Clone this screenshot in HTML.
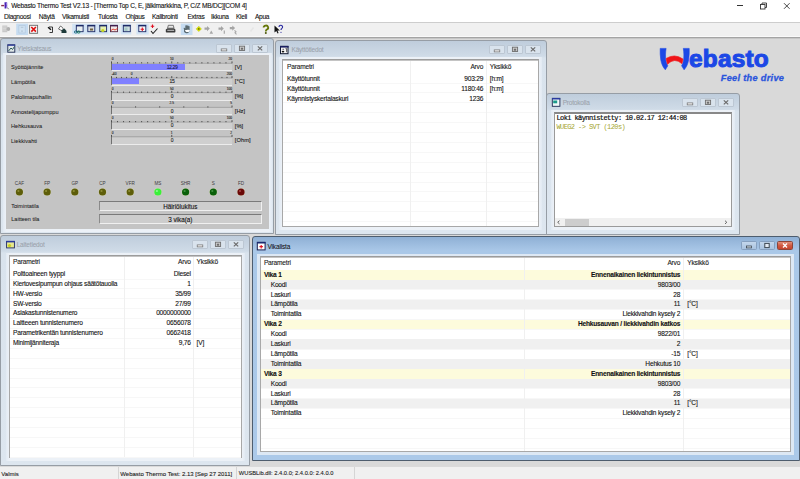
<!DOCTYPE html><html><head><meta charset="utf-8"><style>
*{margin:0;padding:0;box-sizing:border-box}
html,body{width:800px;height:479px;overflow:hidden}
body{position:relative;background:#d9d9d9;font-family:"Liberation Sans",sans-serif;font-size:6px;color:#000}
.a{position:absolute}
.t{position:absolute;white-space:nowrap;-webkit-text-stroke-width:0.1px}
svg{position:absolute;overflow:visible}
</style></head><body><div class="a" style="left:0px;top:0px;width:800px;height:22px;background:#fff"></div>
<svg style="left:0;top:0" width="12" height="12"><path d="M1.2 5.6h3" stroke="#8a3050" stroke-width="1.4"/><path d="M4.5 2.2h2.5l-0.4 1.8 0.4 1.2-0.6 3.2h-1.8z" fill="#4a22b8"/><path d="M7.2 2.5v5.5" stroke="#c8c0f0" stroke-width="0.9"/><path d="M7.4 7.6l1.2 1.6" stroke="#606060" stroke-width="0.9"/></svg>
<div class="t" style="left:11.20px;top:3.41px;font-size:6.6px;line-height:6.6px;color:#111;letter-spacing:-0.22px;">Webasto Thermo Test V2.13 - [Thermo Top C, E, jälkimarkkina, P, C/Z MB/DC][COM 4]</div>
<div class="a" style="left:737px;top:5px;width:6px;height:1px;background:#333"></div>
<svg style="left:0;top:0" width="800" height="12"><rect x="760.5" y="4.5" width="4.5" height="4.5" fill="none" stroke="#333" stroke-width="0.9"/><path d="M762 4.5V3h4.5v4.5H765" fill="none" stroke="#333" stroke-width="0.9"/><path d="M784 3.2l5.6 5.6M789.6 3.2L784 8.8" stroke="#333" stroke-width="0.9"/></svg>
<div class="t" style="left:4.00px;top:14.01px;font-size:6.6px;line-height:6.6px;color:#111;letter-spacing:-0.3px;">Diagnoosi</div>
<div class="t" style="left:38.80px;top:14.01px;font-size:6.6px;line-height:6.6px;color:#111;letter-spacing:-0.3px;">Näytä</div>
<div class="t" style="left:62.00px;top:14.01px;font-size:6.6px;line-height:6.6px;color:#111;letter-spacing:-0.3px;">Vikamuisti</div>
<div class="t" style="left:98.00px;top:14.01px;font-size:6.6px;line-height:6.6px;color:#111;letter-spacing:-0.3px;">Tulosta</div>
<div class="t" style="left:125.50px;top:14.01px;font-size:6.6px;line-height:6.6px;color:#111;letter-spacing:-0.3px;">Ohjaus</div>
<div class="t" style="left:152.00px;top:14.01px;font-size:6.6px;line-height:6.6px;color:#111;letter-spacing:-0.3px;">Kalibrointi</div>
<div class="t" style="left:187.50px;top:14.01px;font-size:6.6px;line-height:6.6px;color:#111;letter-spacing:-0.3px;">Extras</div>
<div class="t" style="left:211.00px;top:14.01px;font-size:6.6px;line-height:6.6px;color:#111;letter-spacing:-0.3px;">Ikkuna</div>
<div class="t" style="left:236.00px;top:14.01px;font-size:6.6px;line-height:6.6px;color:#111;letter-spacing:-0.3px;">Kieli</div>
<div class="t" style="left:255.00px;top:14.01px;font-size:6.6px;line-height:6.6px;color:#111;letter-spacing:-0.3px;">Apua</div>
<div class="a" style="left:0px;top:22px;width:800px;height:16px;background:#f0f0f0"></div>
<div class="a" style="left:0px;top:22px;width:800px;height:1px;background:#cdcdcd"></div>
<div class="a" style="left:0px;top:36px;width:800px;height:1px;background:#f9f9f9"></div>
<div class="a" style="left:0px;top:37px;width:800px;height:1px;background:#a4a4a4"></div>
<div class="a" style="left:0px;top:38px;width:800px;height:1px;background:#c6c6c6"></div>
<svg style="left:0;top:0" width="800" height="40"><path d="M2.3 25.6h5v6.6h-5z" fill="#c8c8c8"/><path d="M2.8 27h4M2.8 28.5h4M2.8 30h4" stroke="#e4e4e4" stroke-width="0.5"/><circle cx="8.3" cy="29" r="1.9" fill="#b0b0b0"/><rect x="16.2" y="23.6" width="11.8" height="11.4" fill="#c6dcf1"/><path d="M18.8 25.5h6.5v7.5h-6.5z" fill="#d0e2f2" stroke="#b0c4d8" stroke-width="0.6"/><path d="M20.8 27.3h2.5" stroke="#9fb0c0" stroke-width="0.6"/><circle cx="22" cy="31" r="0.6" fill="#8c9cac"/><rect x="29.6" y="25.3" width="8" height="8" fill="#f4f4f4" stroke="#6a6a6a" stroke-width="0.9"/><path d="M31.3 27l4.6 4.6M35.9 27l-4.6 4.6" stroke="#e01010" stroke-width="1.6"/><path d="M49 27h3.5v5.5h-3" fill="none" stroke="#222" stroke-width="0.9"/><path d="M48 27.2l3 2.6" stroke="#111" stroke-width="1.4"/><path d="M58.5 29l2-3 2 1.5 1 2 -1 1.5z" fill="#fff" stroke="#333" stroke-width="0.7"/><path d="M61.5 30l3-1.5 2 2.5v2h-5z" fill="#1e3a3a"/><rect x="72.2" y="23.8" width="47.3" height="10.7" fill="#d3e4f4"/><rect x="108.5" y="23.8" width="11" height="10.7" fill="#e2ecf6"/><rect x="120.6" y="23.8" width="10.7" height="10.7" fill="#d3e4f4"/><rect x="136.4" y="23.8" width="12.3" height="10.7" fill="#d3e4f4"/><rect x="180.8" y="23.6" width="11.7" height="11.4" fill="#c6dcf1"/><rect x="76.3" y="25.3" width="6.8" height="6.4" fill="#e8eef0" stroke="#1d2a66" stroke-width="0.9"/><rect x="76" y="25" width="7.4" height="1.4" fill="#1d2a66"/><ellipse cx="75.8" cy="32" rx="1.5" ry="1.1" fill="none" stroke="#1a6a80" stroke-width="0.9"/><ellipse cx="78.6" cy="32" rx="1.5" ry="1.1" fill="none" stroke="#1a7a5a" stroke-width="0.9"/><rect x="87.8" y="25.3" width="7" height="6.4" fill="#d8dde0" stroke="#1d2a66" stroke-width="0.9"/><rect x="87.5" y="25" width="7.6" height="1.4" fill="#1d2a66"/><path d="M90 28.5h3v2h-3z" fill="#706040"/><rect x="99.8" y="25.3" width="6.8" height="6.4" fill="#e6f0b0" stroke="#1d2a66" stroke-width="0.9"/><rect x="99.5" y="25" width="7.4" height="1.4" fill="#1d2a66"/><circle cx="102.8" cy="30.5" r="1.6" fill="#c8d820"/><rect x="110.5" y="25.3" width="7" height="6.4" fill="#f0e8e8" stroke="#5a2a40" stroke-width="0.9"/><rect x="110.2" y="25" width="7.6" height="1.4" fill="#402050"/><path d="M111 30.5l2-1.5 2 1 2.5-1.5" stroke="#e03020" stroke-width="0.9" fill="none"/><rect x="123.3" y="25.3" width="7" height="6.4" fill="#cfe0e0" stroke="#1d2a66" stroke-width="0.9"/><rect x="123" y="25" width="7.6" height="1.4" fill="#1d2a66"/><rect x="124.5" y="27.5" width="3" height="3.5" fill="#a8c8c8"/><rect x="138.8" y="25.3" width="7" height="6.4" fill="#f8f8f8" stroke="#1d2a66" stroke-width="0.9"/><rect x="138.5" y="25" width="7.6" height="1.4" fill="#1d2a66"/><path d="M142.3 27.5v3.5M140.6 29.2h3.4" stroke="#e01020" stroke-width="1.1"/><path d="M152.5 24.6v3.4M150.8 26.3h3.4" stroke="#e01020" stroke-width="1.1"/><path d="M151 31l2 2.5 4.5-5" stroke="#222" stroke-width="1.1" fill="none"/><path d="M167.5 28.2h6.5l1.4 1.2v2.4q0 0.8-0.8 0.8h-8q-0.8 0-0.8-0.8v-2.4z" fill="#3c3c3c"/><path d="M168.3 25.3h5l0.7 2.9h-6.4z" fill="#e8e8e8" stroke="#444" stroke-width="0.7"/><path d="M167.3 30.3h6.8" stroke="#d8d8d8" stroke-width="0.9"/><path d="M184 29.2c-0.6-0.8-0.3-1.6 0.5-1.4l0.8 0.6v-2.6c0-0.8 1-0.8 1.1 0v-0.3c0-0.8 1.1-0.8 1.1 0v0.4c0.1-0.7 1.1-0.7 1.1 0v0.6c0.1-0.6 1-0.6 1 0.1v3.6c0 1.6-1.1 3-2.6 3h-0.8c-1 0-1.6-0.6-2.2-1.4z" fill="#5b6b72"/><path d="M184.8 30.3c0.6 0.9 1.2 1.8 2.3 1.8h0.8c1 0 1.8-0.8 2-1.9c-1.5-0.6-3.3-0.6-5.1 0.1z" fill="#fff"/><path d="M198.8 26.2l2.7 2.7-2.7 2.7-2.7-2.7z" fill="#d6e000" stroke="#b8c000" stroke-width="0.4"/><circle cx="198.8" cy="28.9" r="0.9" fill="#6a7000"/><path d="M204.5 27.5h2.5v-1.5l2.8 2.6-2.8 2.6v-1.5h-2.5z" fill="#a5a5a5"/><path d="M209.5 33.8l1.8-3.2 1.8 3.2z" fill="#a8a8a8"/><path d="M218.5 27.5h2.5v-1.5l2.8 2.6-2.8 2.6v-1.5h-2.5z" fill="#a5a5a5"/><path d="M224.3 30.6v3.2" stroke="#a8a8a8" stroke-width="1.2"/><path d="M229.8 27h2.5v-1.5l2.8 2.6-2.8 2.6v-1.5h-2.5z" fill="#a5a5a5"/><path d="M234.5 30.3l1.5 1.5-1 1 1.5 1.5" stroke="#a8a8a8" stroke-width="1.1" fill="none"/><path d="M250.5 31.5l3-4" stroke="#e6e6e6" stroke-width="1.6"/><path d="M263.6 27.6a2.3 2.1 0 1 1 3.3 1.9c-0.9 0.5-1.1 1-1.1 1.9" stroke="#66780a" stroke-width="1.8" fill="none"/><circle cx="265.8" cy="32.9" r="1" fill="#4a5608"/><path d="M274.5 25.5v7l1.8-1.6 1.3 2.6 1-0.5-1.2-2.5h2.4z" fill="#111"/><path d="M279 27a1.8 1.7 0 1 1 2.8 1.4c-0.7 0.4-0.8 0.9-0.8 1.6" stroke="#2a2aa0" stroke-width="1.1" fill="none"/><circle cx="281" cy="32.3" r="0.6" fill="#2a2aa0"/></svg>
<div class="a" style="left:0px;top:38px;width:274px;height:196px;border:1px solid #969da5;border-radius:3px 3px 0 0;background:linear-gradient(#bfcddc 0px,#cfdbe7 15px,#d9e3ed 17px,#dde6ef 100%)"></div>
<div class="a" style="left:3px;top:53px;width:269px;height:179px;background:linear-gradient(90deg,#e2eaf3,#ecf1f7 3px,#ecf1f7 calc(100% - 3px),#e2eaf3)"></div>
<div class="a" style="left:6px;top:55px;width:263px;height:174px;background:#c4c4c4"></div>
<div class="a" style="left:216px;top:44px;width:16px;height:9px;background:#d9e3ed;border:1px solid #bcc7d3;border-radius:1px"></div>
<div class="a" style="left:234px;top:44px;width:16px;height:9px;background:#d9e3ed;border:1px solid #bcc7d3;border-radius:1px"></div>
<div class="a" style="left:252px;top:44px;width:16px;height:9px;background:#d9e3ed;border:1px solid #bcc7d3;border-radius:1px"></div>
<svg style="left:0;top:0" width="1" height="1"><rect x="221.20" y="48.90" width="5.6" height="2" fill="#f4f4f4" stroke="#6e6e6e" stroke-width="0.7"/><rect x="239.40" y="46.20" width="5.2" height="4.3" fill="#d0d0d0" stroke="#6e6e6e" stroke-width="0.9"/><rect x="240.80" y="47.70" width="2.4" height="2" fill="#6e6e6e"/>
<path d="M257.80 46.40l4.4 4M262.20 46.40l-4.4 4" stroke="#6a6a6a" stroke-width="1.2"/></svg>
<div class="t" style="left:17.30px;top:46.30px;font-size:6.5px;line-height:6.5px;color:#99a1aa;-webkit-text-stroke-width:0.05px;letter-spacing:-0.2px;">Yleiskatsaus</div>
<div class="a" style="left:275px;top:40px;width:272px;height:195px;border:1px solid #969da5;border-radius:3px 3px 0 0;background:linear-gradient(#bfcddc 0px,#cfdbe7 15px,#d9e3ed 17px,#dde6ef 100%)"></div>
<div class="a" style="left:279px;top:57px;width:263px;height:173px;background:linear-gradient(90deg,#e2eaf3,#ecf1f7 3px,#ecf1f7 calc(100% - 3px),#e2eaf3)"></div>
<div class="a" style="left:489px;top:45px;width:16px;height:9px;background:#d9e3ed;border:1px solid #bcc7d3;border-radius:1px"></div>
<div class="a" style="left:507px;top:45px;width:16px;height:9px;background:#d9e3ed;border:1px solid #bcc7d3;border-radius:1px"></div>
<div class="a" style="left:525px;top:45px;width:16px;height:9px;background:#d9e3ed;border:1px solid #bcc7d3;border-radius:1px"></div>
<svg style="left:0;top:0" width="1" height="1"><rect x="494.20" y="49.90" width="5.6" height="2" fill="#f4f4f4" stroke="#6e6e6e" stroke-width="0.7"/><rect x="512.40" y="47.20" width="5.2" height="4.3" fill="#d0d0d0" stroke="#6e6e6e" stroke-width="0.9"/><rect x="513.80" y="48.70" width="2.4" height="2" fill="#6e6e6e"/>
<path d="M530.80 47.40l4.4 4M535.20 47.40l-4.4 4" stroke="#6a6a6a" stroke-width="1.2"/></svg>
<div class="t" style="left:291.50px;top:47.20px;font-size:6.5px;line-height:6.5px;color:#99a1aa;-webkit-text-stroke-width:0.05px;letter-spacing:-0.2px;">Käyttötiedot</div>
<div class="a" style="left:282px;top:59px;width:257px;height:168px;background:#fff;border:1px solid #a8a8a8;border-top:1px solid #9c9c9c;box-shadow:inset 0 1px #c4c4c4"></div>
<div class="a" style="left:283px;top:82.50px;width:255px;height:1px;background:#f7f7f7"></div>
<div class="a" style="left:283px;top:92.40px;width:255px;height:1px;background:#f7f7f7"></div>
<div class="a" style="left:283px;top:102.30px;width:255px;height:1px;background:#f7f7f7"></div>
<div class="a" style="left:283px;top:112.20px;width:255px;height:1px;background:#f7f7f7"></div>
<div class="a" style="left:283px;top:122.10px;width:255px;height:1px;background:#f7f7f7"></div>
<div class="a" style="left:283px;top:132.00px;width:255px;height:1px;background:#f7f7f7"></div>
<div class="a" style="left:283px;top:141.90px;width:255px;height:1px;background:#f7f7f7"></div>
<div class="a" style="left:283px;top:151.80px;width:255px;height:1px;background:#f7f7f7"></div>
<div class="a" style="left:283px;top:161.70px;width:255px;height:1px;background:#f7f7f7"></div>
<div class="a" style="left:283px;top:171.60px;width:255px;height:1px;background:#f7f7f7"></div>
<div class="a" style="left:283px;top:181.50px;width:255px;height:1px;background:#f7f7f7"></div>
<div class="a" style="left:283px;top:191.40px;width:255px;height:1px;background:#f7f7f7"></div>
<div class="a" style="left:283px;top:201.30px;width:255px;height:1px;background:#f7f7f7"></div>
<div class="a" style="left:283px;top:211.20px;width:255px;height:1px;background:#f7f7f7"></div>
<div class="a" style="left:283px;top:221.10px;width:255px;height:1px;background:#f7f7f7"></div>
<div class="a" style="left:410px;top:61px;width:1px;height:165px;background:#f0f0f0"></div>
<div class="a" style="left:486px;top:61px;width:1px;height:165px;background:#f0f0f0"></div>
<div class="a" style="left:546px;top:93px;width:194px;height:142px;border:1px solid #969da5;border-radius:3px 3px 0 0;background:linear-gradient(#bfcddc 0px,#cfdbe7 15px,#d9e3ed 17px,#dde6ef 100%)"></div>
<div class="a" style="left:551px;top:110px;width:184px;height:120px;background:linear-gradient(90deg,#e2eaf3,#ecf1f7 3px,#ecf1f7 calc(100% - 3px),#e2eaf3)"></div>
<div class="a" style="left:682px;top:98px;width:16px;height:9px;background:#d9e3ed;border:1px solid #bcc7d3;border-radius:1px"></div>
<div class="a" style="left:700px;top:98px;width:16px;height:9px;background:#d9e3ed;border:1px solid #bcc7d3;border-radius:1px"></div>
<div class="a" style="left:718px;top:98px;width:16px;height:9px;background:#d9e3ed;border:1px solid #bcc7d3;border-radius:1px"></div>
<svg style="left:0;top:0" width="1" height="1"><rect x="687.20" y="102.90" width="5.6" height="2" fill="#f4f4f4" stroke="#6e6e6e" stroke-width="0.7"/><rect x="705.40" y="100.20" width="5.2" height="4.3" fill="#d0d0d0" stroke="#6e6e6e" stroke-width="0.9"/><rect x="706.80" y="101.70" width="2.4" height="2" fill="#6e6e6e"/>
<path d="M723.80 100.40l4.4 4M728.20 100.40l-4.4 4" stroke="#6a6a6a" stroke-width="1.2"/></svg>
<div class="t" style="left:562.70px;top:99.70px;font-size:6.5px;line-height:6.5px;color:#99a1aa;-webkit-text-stroke-width:0.05px;letter-spacing:-0.2px;">Protokolla</div>
<div class="a" style="left:554px;top:112px;width:178px;height:115px;background:#fff;border:1px solid #9a9a9a;border-top:2px solid #888"></div>
<div class="a" style="left:0px;top:235px;width:250px;height:231px;border:1px solid #969da5;border-radius:3px 3px 0 0;background:linear-gradient(#bfcddc 0px,#cfdbe7 15px,#d9e3ed 17px,#dde6ef 100%)"></div>
<div class="a" style="left:6px;top:253px;width:239px;height:208px;background:linear-gradient(90deg,#e2eaf3,#ecf1f7 3px,#ecf1f7 calc(100% - 3px),#e2eaf3)"></div>
<div class="a" style="left:192px;top:240px;width:16px;height:9px;background:#d9e3ed;border:1px solid #bcc7d3;border-radius:1px"></div>
<div class="a" style="left:210px;top:240px;width:16px;height:9px;background:#d9e3ed;border:1px solid #bcc7d3;border-radius:1px"></div>
<div class="a" style="left:228px;top:240px;width:16px;height:9px;background:#d9e3ed;border:1px solid #bcc7d3;border-radius:1px"></div>
<svg style="left:0;top:0" width="1" height="1"><rect x="197.20" y="244.90" width="5.6" height="2" fill="#f4f4f4" stroke="#6e6e6e" stroke-width="0.7"/><rect x="215.40" y="242.20" width="5.2" height="4.3" fill="#d0d0d0" stroke="#6e6e6e" stroke-width="0.9"/><rect x="216.80" y="243.70" width="2.4" height="2" fill="#6e6e6e"/>
<path d="M233.80 242.40l4.4 4M238.20 242.40l-4.4 4" stroke="#6a6a6a" stroke-width="1.2"/></svg>
<div class="t" style="left:16.70px;top:242.20px;font-size:6.5px;line-height:6.5px;color:#99a1aa;-webkit-text-stroke-width:0.05px;letter-spacing:-0.2px;">Laitetiedot</div>
<div class="a" style="left:9px;top:255px;width:233px;height:203px;background:#fff;border:1px solid #a8a8a8;border-top:1px solid #9c9c9c;box-shadow:inset 0 1px #c4c4c4"></div>
<div class="a" style="left:10px;top:278.50px;width:231px;height:1px;background:#f7f7f7"></div>
<div class="a" style="left:10px;top:288.40px;width:231px;height:1px;background:#f7f7f7"></div>
<div class="a" style="left:10px;top:298.30px;width:231px;height:1px;background:#f7f7f7"></div>
<div class="a" style="left:10px;top:308.20px;width:231px;height:1px;background:#f7f7f7"></div>
<div class="a" style="left:10px;top:318.10px;width:231px;height:1px;background:#f7f7f7"></div>
<div class="a" style="left:10px;top:328.00px;width:231px;height:1px;background:#f7f7f7"></div>
<div class="a" style="left:10px;top:337.90px;width:231px;height:1px;background:#f7f7f7"></div>
<div class="a" style="left:10px;top:347.80px;width:231px;height:1px;background:#f7f7f7"></div>
<div class="a" style="left:10px;top:357.70px;width:231px;height:1px;background:#f7f7f7"></div>
<div class="a" style="left:10px;top:367.60px;width:231px;height:1px;background:#f7f7f7"></div>
<div class="a" style="left:10px;top:377.50px;width:231px;height:1px;background:#f7f7f7"></div>
<div class="a" style="left:10px;top:387.40px;width:231px;height:1px;background:#f7f7f7"></div>
<div class="a" style="left:10px;top:397.30px;width:231px;height:1px;background:#f7f7f7"></div>
<div class="a" style="left:10px;top:407.20px;width:231px;height:1px;background:#f7f7f7"></div>
<div class="a" style="left:10px;top:417.10px;width:231px;height:1px;background:#f7f7f7"></div>
<div class="a" style="left:10px;top:427.00px;width:231px;height:1px;background:#f7f7f7"></div>
<div class="a" style="left:10px;top:436.90px;width:231px;height:1px;background:#f7f7f7"></div>
<div class="a" style="left:10px;top:446.80px;width:231px;height:1px;background:#f7f7f7"></div>
<div class="a" style="left:10px;top:456.70px;width:231px;height:1px;background:#f7f7f7"></div>
<div class="a" style="left:124px;top:257px;width:1px;height:200px;background:#f0f0f0"></div>
<div class="a" style="left:193px;top:257px;width:1px;height:200px;background:#f0f0f0"></div>
<div class="a" style="left:252px;top:236px;width:548px;height:225px;border:1px solid #4e5d6e;border-radius:3px 3px 0 0;background:linear-gradient(#8fb0d5 0px,#aac8e8 14px,#abc9e9 100%)"></div>
<div class="a" style="left:257px;top:254px;width:537px;height:201px;background:#dde8f4"></div>
<div class="a" style="left:741px;top:241px;width:16px;height:9px;background:linear-gradient(#c4d7ec,#a9c3e0);border:1px solid #86a0bf;border-radius:1.5px"></div>
<div class="a" style="left:759px;top:241px;width:16px;height:9px;background:linear-gradient(#c4d7ec,#a9c3e0);border:1px solid #86a0bf;border-radius:1.5px"></div>
<div class="a" style="left:777px;top:241px;width:16px;height:9px;background:linear-gradient(#e2907c,#d05a42 50%,#c4442e);border:1px solid #8d4538;border-radius:1.5px"></div>
<svg style="left:0;top:0" width="1" height="1"><rect x="746.60" y="246.00" width="4.8" height="1.9" fill="#dde6ef" stroke="#3c4650" stroke-width="0.8"/><rect x="764.80" y="243.40" width="4.4" height="4.2" fill="#e4ecf4" stroke="#3c4650" stroke-width="1"/>
<path d="M783.00 243.60l4 3.8M787.00 243.60l-4 3.8" stroke="#fff" stroke-width="1.4"/></svg>
<div class="t" style="left:267.50px;top:244.00px;font-size:6.5px;line-height:6.5px;color:#111;letter-spacing:-0.15px;-webkit-text-stroke-width:0.05px;">Vikalista</div>
<div class="a" style="left:260px;top:256px;width:531px;height:196px;background:#fff;border:1px solid #a8a8a8;border-top:1px solid #9c9c9c;box-shadow:inset 0 1px #c4c4c4"></div>
<div class="a" style="left:261px;top:270.10px;width:529px;height:9.90px;background:#fdfbdc"></div>
<div class="a" style="left:261px;top:279.50px;width:529px;height:1px;background:#f7f7f7"></div>
<div class="a" style="left:261px;top:280.00px;width:529px;height:9.90px;background:#f0f0f0"></div>
<div class="a" style="left:261px;top:289.40px;width:529px;height:1px;background:#f7f7f7"></div>
<div class="a" style="left:261px;top:299.30px;width:529px;height:1px;background:#f7f7f7"></div>
<div class="a" style="left:261px;top:299.80px;width:529px;height:9.90px;background:#f0f0f0"></div>
<div class="a" style="left:261px;top:309.20px;width:529px;height:1px;background:#f7f7f7"></div>
<div class="a" style="left:261px;top:319.10px;width:529px;height:1px;background:#f7f7f7"></div>
<div class="a" style="left:261px;top:319.60px;width:529px;height:9.90px;background:#fdfbdc"></div>
<div class="a" style="left:261px;top:329.00px;width:529px;height:1px;background:#f7f7f7"></div>
<div class="a" style="left:261px;top:338.90px;width:529px;height:1px;background:#f7f7f7"></div>
<div class="a" style="left:261px;top:339.40px;width:529px;height:9.90px;background:#f0f0f0"></div>
<div class="a" style="left:261px;top:348.80px;width:529px;height:1px;background:#f7f7f7"></div>
<div class="a" style="left:261px;top:358.70px;width:529px;height:1px;background:#f7f7f7"></div>
<div class="a" style="left:261px;top:359.20px;width:529px;height:9.90px;background:#f0f0f0"></div>
<div class="a" style="left:261px;top:368.60px;width:529px;height:1px;background:#f7f7f7"></div>
<div class="a" style="left:261px;top:369.10px;width:529px;height:9.90px;background:#fdfbdc"></div>
<div class="a" style="left:261px;top:378.50px;width:529px;height:1px;background:#f7f7f7"></div>
<div class="a" style="left:261px;top:379.00px;width:529px;height:9.90px;background:#f0f0f0"></div>
<div class="a" style="left:261px;top:388.40px;width:529px;height:1px;background:#f7f7f7"></div>
<div class="a" style="left:261px;top:398.30px;width:529px;height:1px;background:#f7f7f7"></div>
<div class="a" style="left:261px;top:398.80px;width:529px;height:9.90px;background:#f0f0f0"></div>
<div class="a" style="left:261px;top:408.20px;width:529px;height:1px;background:#f7f7f7"></div>
<div class="a" style="left:261px;top:418.10px;width:529px;height:1px;background:#f7f7f7"></div>
<div class="a" style="left:261px;top:428.00px;width:529px;height:1px;background:#f7f7f7"></div>
<div class="a" style="left:261px;top:437.90px;width:529px;height:1px;background:#f7f7f7"></div>
<div class="a" style="left:261px;top:447.80px;width:529px;height:1px;background:#f7f7f7"></div>
<div class="a" style="left:524px;top:258px;width:1px;height:193px;background:#f0f0f0"></div>
<div class="a" style="left:683px;top:258px;width:1px;height:193px;background:#f0f0f0"></div>
<div class="t" style="left:11.00px;top:65.46px;font-size:5.6px;line-height:5.6px;color:#1a1a1a;-webkit-text-stroke-width:0.05px;">Syöttöjännite</div>
<div class="t" style="left:234.80px;top:64.79px;font-size:5.8px;line-height:5.8px;color:#1a1a1a;">[V]</div>
<div class="a" style="left:111.00px;top:63.10px;width:121.00px;height:7.2px;background:#cfcfcf;border-left:1px solid #707070"></div>
<div class="a" style="left:111.50px;top:70.10px;width:120.50px;height:1px;background:#ececec"></div>
<div class="a" style="left:112.00px;top:63.70px;width:73.13px;height:6px;background:#8080ff"></div>
<svg style="left:0;top:0" width="1" height="1"><path d="M111.5 63.300000000000004H232.0" stroke="#8a8a8a" stroke-width="0.6"/><path d="M111.50 63.40v-2.0M117.53 63.40v-1.2M123.55 63.40v-1.2M129.57 63.40v-1.2M135.60 63.40v-1.2M141.62 63.40v-1.2M147.65 63.40v-1.2M153.68 63.40v-1.2M159.70 63.40v-1.2M165.72 63.40v-1.2M171.75 63.40v-2.0M177.78 63.40v-1.2M183.80 63.40v-1.2M189.82 63.40v-1.2M195.85 63.40v-1.2M201.88 63.40v-1.2M207.90 63.40v-1.2M213.93 63.40v-1.2M219.95 63.40v-1.2M225.97 63.40v-1.2M232.00 63.40v-2.0" stroke="#333" stroke-width="0.8"/></svg>
<div class="t" style="left:111.80px;top:58.19px;font-size:3.2px;line-height:3.2px;color:#222;">0</div>
<div class="t" style="left:21.75px;width:300px;text-align:center;top:58.19px;font-size:3.2px;line-height:3.2px;color:#222;">10</div>
<div class="t" style="left:-68.00px;width:300px;text-align:right;top:58.19px;font-size:3.2px;line-height:3.2px;color:#222;">20</div>
<div class="t" style="left:22.05px;width:300px;text-align:center;top:64.67px;font-size:5px;line-height:5px;color:#1a1a50;letter-spacing:-0.35px;-webkit-text-stroke-width:0.1px;">12.29</div>
<div class="t" style="left:11.00px;top:80.16px;font-size:5.6px;line-height:5.6px;color:#1a1a1a;-webkit-text-stroke-width:0.05px;">Lämpötila</div>
<div class="t" style="left:234.80px;top:79.49px;font-size:5.8px;line-height:5.8px;color:#1a1a1a;">[°C]</div>
<div class="a" style="left:111.00px;top:77.80px;width:121.00px;height:7.2px;background:#cfcfcf;border-left:1px solid #707070"></div>
<div class="a" style="left:111.50px;top:84.80px;width:120.50px;height:1px;background:#ececec"></div>
<div class="a" style="left:112.00px;top:78.40px;width:27.27px;height:6px;background:#8080ff"></div>
<svg style="left:0;top:0" width="1" height="1"><path d="M111.5 78.0H232.0" stroke="#8a8a8a" stroke-width="0.6"/><path d="M111.50 78.10v-2.0M116.52 78.10v-1.2M121.54 78.10v-1.2M126.56 78.10v-1.2M131.58 78.10v-1.2M136.60 78.10v-1.2M141.62 78.10v-1.2M146.65 78.10v-1.2M151.67 78.10v-1.2M156.69 78.10v-1.2M161.71 78.10v-1.2M166.73 78.10v-1.2M171.75 78.10v-2.0M176.77 78.10v-1.2M181.79 78.10v-1.2M186.81 78.10v-1.2M191.83 78.10v-1.2M196.85 78.10v-1.2M201.88 78.10v-1.2M206.90 78.10v-1.2M211.92 78.10v-1.2M216.94 78.10v-1.2M221.96 78.10v-1.2M226.98 78.10v-1.2M232.00 78.10v-2.0" stroke="#333" stroke-width="0.8"/></svg>
<div class="t" style="left:111.80px;top:72.89px;font-size:3.2px;line-height:3.2px;color:#222;">-40</div>
<div class="t" style="left:-18.42px;width:300px;text-align:center;top:72.89px;font-size:3.2px;line-height:3.2px;color:#222;">0</div>
<div class="t" style="left:-68.00px;width:300px;text-align:right;top:72.89px;font-size:3.2px;line-height:3.2px;color:#222;">200</div>
<div class="t" style="left:22.05px;width:300px;text-align:center;top:79.37px;font-size:5px;line-height:5px;color:#222;letter-spacing:-0.35px;-webkit-text-stroke-width:0.1px;">15</div>
<div class="t" style="left:11.00px;top:94.86px;font-size:5.6px;line-height:5.6px;color:#1a1a1a;-webkit-text-stroke-width:0.05px;">Palolimapuhallin</div>
<div class="t" style="left:234.80px;top:94.19px;font-size:5.8px;line-height:5.8px;color:#1a1a1a;">[%]</div>
<div class="a" style="left:111.00px;top:92.50px;width:121.00px;height:7.2px;background:#cfcfcf;border-left:1px solid #707070"></div>
<div class="a" style="left:111.50px;top:99.50px;width:120.50px;height:1px;background:#ececec"></div>
<svg style="left:0;top:0" width="1" height="1"><path d="M111.5 92.7H232.0" stroke="#8a8a8a" stroke-width="0.6"/><path d="M111.50 92.80v-2.0M117.53 92.80v-1.2M123.55 92.80v-1.2M129.57 92.80v-1.2M135.60 92.80v-1.2M141.62 92.80v-1.2M147.65 92.80v-1.2M153.68 92.80v-1.2M159.70 92.80v-1.2M165.72 92.80v-1.2M171.75 92.80v-2.0M177.78 92.80v-1.2M183.80 92.80v-1.2M189.82 92.80v-1.2M195.85 92.80v-1.2M201.88 92.80v-1.2M207.90 92.80v-1.2M213.93 92.80v-1.2M219.95 92.80v-1.2M225.97 92.80v-1.2M232.00 92.80v-2.0" stroke="#333" stroke-width="0.8"/></svg>
<div class="t" style="left:111.80px;top:87.59px;font-size:3.2px;line-height:3.2px;color:#222;">0</div>
<div class="t" style="left:21.75px;width:300px;text-align:center;top:87.59px;font-size:3.2px;line-height:3.2px;color:#222;">50</div>
<div class="t" style="left:-68.00px;width:300px;text-align:right;top:87.59px;font-size:3.2px;line-height:3.2px;color:#222;">100</div>
<div class="t" style="left:22.05px;width:300px;text-align:center;top:94.07px;font-size:5px;line-height:5px;color:#222;letter-spacing:-0.35px;-webkit-text-stroke-width:0.1px;">0</div>
<div class="t" style="left:11.00px;top:109.56px;font-size:5.6px;line-height:5.6px;color:#1a1a1a;-webkit-text-stroke-width:0.05px;">Annostelijapumppu</div>
<div class="t" style="left:234.80px;top:108.89px;font-size:5.8px;line-height:5.8px;color:#1a1a1a;">[Hz]</div>
<div class="a" style="left:111.00px;top:107.20px;width:121.00px;height:7.2px;background:#cfcfcf;border-left:1px solid #707070"></div>
<div class="a" style="left:111.50px;top:114.20px;width:120.50px;height:1px;background:#ececec"></div>
<svg style="left:0;top:0" width="1" height="1"><path d="M111.5 107.39999999999999H232.0" stroke="#8a8a8a" stroke-width="0.6"/><path d="M111.50 107.50v-2.0M135.60 107.50v-1.2M159.70 107.50v-1.2M183.80 107.50v-1.2M207.90 107.50v-1.2M232.00 107.50v-2.0" stroke="#333" stroke-width="0.8"/></svg>
<div class="t" style="left:111.80px;top:102.29px;font-size:3.2px;line-height:3.2px;color:#222;">0</div>
<div class="t" style="left:21.75px;width:300px;text-align:center;top:102.29px;font-size:3.2px;line-height:3.2px;color:#222;">2.5</div>
<div class="t" style="left:-68.00px;width:300px;text-align:right;top:102.29px;font-size:3.2px;line-height:3.2px;color:#222;">5</div>
<div class="t" style="left:22.05px;width:300px;text-align:center;top:108.77px;font-size:5px;line-height:5px;color:#222;letter-spacing:-0.35px;-webkit-text-stroke-width:0.1px;">0</div>
<div class="t" style="left:11.00px;top:124.26px;font-size:5.6px;line-height:5.6px;color:#1a1a1a;-webkit-text-stroke-width:0.05px;">Hehkusauva</div>
<div class="t" style="left:234.80px;top:123.59px;font-size:5.8px;line-height:5.8px;color:#1a1a1a;">[%]</div>
<div class="a" style="left:111.00px;top:121.90px;width:121.00px;height:7.2px;background:#cfcfcf;border-left:1px solid #707070"></div>
<div class="a" style="left:111.50px;top:128.90px;width:120.50px;height:1px;background:#ececec"></div>
<svg style="left:0;top:0" width="1" height="1"><path d="M111.5 122.10000000000001H232.0" stroke="#8a8a8a" stroke-width="0.6"/><path d="M111.50 122.20v-2.0M117.53 122.20v-1.2M123.55 122.20v-1.2M129.57 122.20v-1.2M135.60 122.20v-1.2M141.62 122.20v-1.2M147.65 122.20v-1.2M153.68 122.20v-1.2M159.70 122.20v-1.2M165.72 122.20v-1.2M171.75 122.20v-2.0M177.78 122.20v-1.2M183.80 122.20v-1.2M189.82 122.20v-1.2M195.85 122.20v-1.2M201.88 122.20v-1.2M207.90 122.20v-1.2M213.93 122.20v-1.2M219.95 122.20v-1.2M225.97 122.20v-1.2M232.00 122.20v-2.0" stroke="#333" stroke-width="0.8"/></svg>
<div class="t" style="left:111.80px;top:116.99px;font-size:3.2px;line-height:3.2px;color:#222;">0</div>
<div class="t" style="left:21.75px;width:300px;text-align:center;top:116.99px;font-size:3.2px;line-height:3.2px;color:#222;">50</div>
<div class="t" style="left:-68.00px;width:300px;text-align:right;top:116.99px;font-size:3.2px;line-height:3.2px;color:#222;">100</div>
<div class="t" style="left:22.05px;width:300px;text-align:center;top:123.47px;font-size:5px;line-height:5px;color:#222;letter-spacing:-0.35px;-webkit-text-stroke-width:0.1px;">0</div>
<div class="t" style="left:11.00px;top:138.96px;font-size:5.6px;line-height:5.6px;color:#1a1a1a;-webkit-text-stroke-width:0.05px;">Liekkivahti</div>
<div class="t" style="left:234.80px;top:138.29px;font-size:5.8px;line-height:5.8px;color:#1a1a1a;">[Ohm]</div>
<div class="a" style="left:111.00px;top:136.60px;width:121.00px;height:7.2px;background:#cfcfcf;border-left:1px solid #707070"></div>
<div class="a" style="left:111.50px;top:143.60px;width:120.50px;height:1px;background:#ececec"></div>
<svg style="left:0;top:0" width="1" height="1"><path d="M111.5 136.79999999999998H232.0" stroke="#8a8a8a" stroke-width="0.6"/><path d="M111.50 136.90v-2.0M171.75 136.90v-2.0M232.00 136.90v-2.0" stroke="#333" stroke-width="0.8"/></svg>
<div class="t" style="left:111.80px;top:131.69px;font-size:3.2px;line-height:3.2px;color:#222;">0</div>
<div class="t" style="left:21.75px;width:300px;text-align:center;top:131.69px;font-size:3.2px;line-height:3.2px;color:#222;">1</div>
<div class="t" style="left:-68.00px;width:300px;text-align:right;top:131.69px;font-size:3.2px;line-height:3.2px;color:#222;">2</div>
<div class="t" style="left:22.05px;width:300px;text-align:center;top:138.17px;font-size:5px;line-height:5px;color:#222;letter-spacing:-0.35px;-webkit-text-stroke-width:0.1px;">0</div>
<div class="t" style="left:-130.60px;width:300px;text-align:center;top:182.41px;font-size:4.6px;line-height:4.6px;color:#404040;-webkit-text-stroke-width:0;">CAF</div>
<svg style="left:0;top:0" width="1" height="1"><circle cx="19.40" cy="192" r="4.1" fill="#e0e0b0" opacity="0.5"/><circle cx="19.40" cy="192" r="3.6" fill="#5e5e0a"/><circle cx="18.40" cy="191" r="1.1" fill="#9a9a40" opacity="0.8"/></svg>
<div class="t" style="left:-102.90px;width:300px;text-align:center;top:182.41px;font-size:4.6px;line-height:4.6px;color:#404040;-webkit-text-stroke-width:0;">FP</div>
<svg style="left:0;top:0" width="1" height="1"><circle cx="47.10" cy="192" r="4.1" fill="#e0e0b0" opacity="0.5"/><circle cx="47.10" cy="192" r="3.6" fill="#5e5e0a"/><circle cx="46.10" cy="191" r="1.1" fill="#9a9a40" opacity="0.8"/></svg>
<div class="t" style="left:-75.20px;width:300px;text-align:center;top:182.41px;font-size:4.6px;line-height:4.6px;color:#404040;-webkit-text-stroke-width:0;">GP</div>
<svg style="left:0;top:0" width="1" height="1"><circle cx="74.80" cy="192" r="4.1" fill="#e0e0b0" opacity="0.5"/><circle cx="74.80" cy="192" r="3.6" fill="#5e5e0a"/><circle cx="73.80" cy="191" r="1.1" fill="#9a9a40" opacity="0.8"/></svg>
<div class="t" style="left:-47.50px;width:300px;text-align:center;top:182.41px;font-size:4.6px;line-height:4.6px;color:#404040;-webkit-text-stroke-width:0;">CP</div>
<svg style="left:0;top:0" width="1" height="1"><circle cx="102.50" cy="192" r="4.1" fill="#e0e0b0" opacity="0.5"/><circle cx="102.50" cy="192" r="3.6" fill="#5e5e0a"/><circle cx="101.50" cy="191" r="1.1" fill="#9a9a40" opacity="0.8"/></svg>
<div class="t" style="left:-19.80px;width:300px;text-align:center;top:182.41px;font-size:4.6px;line-height:4.6px;color:#404040;-webkit-text-stroke-width:0;">VFR</div>
<svg style="left:0;top:0" width="1" height="1"><circle cx="130.20" cy="192" r="4.1" fill="#e0e0b0" opacity="0.5"/><circle cx="130.20" cy="192" r="3.6" fill="#5e5e0a"/><circle cx="129.20" cy="191" r="1.1" fill="#9a9a40" opacity="0.8"/></svg>
<div class="t" style="left:7.90px;width:300px;text-align:center;top:182.41px;font-size:4.6px;line-height:4.6px;color:#404040;-webkit-text-stroke-width:0;">MS</div>
<svg style="left:0;top:0" width="1" height="1"><circle cx="157.90" cy="192" r="4.1" fill="#e0e0b0" opacity="0.5"/><circle cx="157.90" cy="192" r="3.6" fill="#3af03a"/><circle cx="156.90" cy="191" r="1.1" fill="#a0ffa0" opacity="0.8"/></svg>
<div class="t" style="left:35.60px;width:300px;text-align:center;top:182.41px;font-size:4.6px;line-height:4.6px;color:#404040;-webkit-text-stroke-width:0;">SHR</div>
<svg style="left:0;top:0" width="1" height="1"><circle cx="185.60" cy="192" r="4.1" fill="#e0e0b0" opacity="0.5"/><circle cx="185.60" cy="192" r="3.6" fill="#0a600a"/><circle cx="184.60" cy="191" r="1.1" fill="#50a050" opacity="0.8"/></svg>
<div class="t" style="left:63.30px;width:300px;text-align:center;top:182.41px;font-size:4.6px;line-height:4.6px;color:#404040;-webkit-text-stroke-width:0;">S</div>
<svg style="left:0;top:0" width="1" height="1"><circle cx="213.30" cy="192" r="4.1" fill="#e0e0b0" opacity="0.5"/><circle cx="213.30" cy="192" r="3.6" fill="#0a600a"/><circle cx="212.30" cy="191" r="1.1" fill="#50a050" opacity="0.8"/></svg>
<div class="t" style="left:91.00px;width:300px;text-align:center;top:182.41px;font-size:4.6px;line-height:4.6px;color:#404040;-webkit-text-stroke-width:0;">FD</div>
<svg style="left:0;top:0" width="1" height="1"><circle cx="241.00" cy="192" r="4.1" fill="#e0e0b0" opacity="0.5"/><circle cx="241.00" cy="192" r="3.6" fill="#6a0808"/><circle cx="240.00" cy="191" r="1.1" fill="#b05050" opacity="0.8"/></svg>
<div class="t" style="left:11.30px;top:203.74px;font-size:5.5px;line-height:5.5px;color:#1a1a1a;-webkit-text-stroke-width:0.05px;">Toimintatila</div>
<div class="t" style="left:11.30px;top:216.94px;font-size:5.5px;line-height:5.5px;color:#1a1a1a;-webkit-text-stroke-width:0.05px;">Laitteen tila</div>
<div class="a" style="left:98.5px;top:201.3px;width:163.5px;height:9.50px;background:#cdcdcd;border-top:1px solid #7a7a7a;border-left:1px solid #8a8a8a;border-bottom:1px solid #f0f0f0;border-right:1px solid #f0f0f0"></div>
<div class="t" style="left:30.30px;width:300px;text-align:center;top:204.47px;font-size:6.3px;line-height:6.3px;color:#111;">Häiriölukitus</div>
<div class="a" style="left:98.5px;top:214.0px;width:163.5px;height:9.60px;background:#cdcdcd;border-top:1px solid #7a7a7a;border-left:1px solid #8a8a8a;border-bottom:1px solid #f0f0f0;border-right:1px solid #f0f0f0"></div>
<div class="t" style="left:30.30px;width:300px;text-align:center;top:217.17px;font-size:6.3px;line-height:6.3px;color:#111;">3 vika(a)</div>
<svg style="left:0;top:0" width="1" height="1"><rect x="7.8" y="44.8" width="7" height="7.4" fill="#e0e8e8" stroke="#202a50" stroke-width="0.9"/><rect x="7.5" y="44.5" width="7.6" height="1.3" fill="#3040a0"/><path d="M8.5 51l2.5-3 1.5 1.5 2-3" stroke="#2a5a5a" stroke-width="1" fill="none"/><rect x="280.5" y="46.3" width="7.5" height="7.4" fill="#f4f4f4" stroke="#101830" stroke-width="1"/><rect x="280" y="46" width="8.5" height="1.6" fill="#1a2060"/><ellipse cx="283" cy="51.6" rx="1.3" ry="0.9" fill="#111"/><path d="M282.5 49.3h1.5M285.5 48.6h1.4M286.6 49v3.2" stroke="#222" stroke-width="0.7"/><rect x="552.3" y="98.3" width="7.6" height="8" fill="#f0fafa" stroke="#1a2850" stroke-width="0.9"/><rect x="552" y="98" width="8.2" height="1.5" fill="#2a3aa0"/><rect x="553.2" y="100.5" width="4" height="2.8" fill="#1a9a8a"/><rect x="6.6" y="241.3" width="7.8" height="6.6" fill="#e8e890" stroke="#202a60" stroke-width="0.9"/><rect x="6.2" y="241" width="8.6" height="1.4" fill="#2a3aa0"/><circle cx="9.5" cy="245.5" r="1.6" fill="#c8d020"/><rect x="257.3" y="242.3" width="7.8" height="7.6" fill="#fff" stroke="#1a2050" stroke-width="1"/><rect x="257" y="242" width="8.4" height="1.5" fill="#1a2a70"/><path d="M261.2 245v3.6M259.5 246.6h3.4" stroke="#e01020" stroke-width="1.1"/></svg>
<div class="t" style="left:287.10px;top:63.71px;font-size:6.6px;line-height:6.6px;color:#1a1a1a;letter-spacing:-0.2px;">Parametri</div>
<div class="t" style="left:183.20px;width:300px;text-align:right;top:63.71px;font-size:6.6px;line-height:6.6px;color:#1a1a1a;letter-spacing:-0.2px;">Arvo</div>
<div class="t" style="left:489.80px;top:63.71px;font-size:6.6px;line-height:6.6px;color:#1a1a1a;letter-spacing:-0.2px;">Yksikkö</div>
<div class="t" style="left:287.10px;top:75.71px;font-size:6.6px;line-height:6.6px;color:#111;letter-spacing:-0.2px;">Käyttötunnit</div>
<div class="t" style="left:183.20px;width:300px;text-align:right;top:75.71px;font-size:6.6px;line-height:6.6px;color:#111;letter-spacing:-0.2px;">903:29</div>
<div class="t" style="left:489.80px;top:75.71px;font-size:6.6px;line-height:6.6px;color:#111;letter-spacing:-0.2px;">[h:m]</div>
<div class="t" style="left:287.10px;top:85.61px;font-size:6.6px;line-height:6.6px;color:#111;letter-spacing:-0.2px;">Käyttötunnit</div>
<div class="t" style="left:183.20px;width:300px;text-align:right;top:85.61px;font-size:6.6px;line-height:6.6px;color:#111;letter-spacing:-0.2px;">1180:46</div>
<div class="t" style="left:489.80px;top:85.61px;font-size:6.6px;line-height:6.6px;color:#111;letter-spacing:-0.2px;">[h:m]</div>
<div class="t" style="left:287.10px;top:95.51px;font-size:6.6px;line-height:6.6px;color:#111;letter-spacing:-0.2px;">Käynnistyskertalaskuri</div>
<div class="t" style="left:183.20px;width:300px;text-align:right;top:95.51px;font-size:6.6px;line-height:6.6px;color:#111;letter-spacing:-0.2px;">1236</div>
<div class="t" style="left:13.00px;top:258.81px;font-size:6.6px;line-height:6.6px;color:#1a1a1a;letter-spacing:-0.2px;">Parametri</div>
<div class="t" style="left:-109.20px;width:300px;text-align:right;top:258.81px;font-size:6.6px;line-height:6.6px;color:#1a1a1a;letter-spacing:-0.2px;">Arvo</div>
<div class="t" style="left:196.60px;top:258.81px;font-size:6.6px;line-height:6.6px;color:#1a1a1a;letter-spacing:-0.2px;">Yksikkö</div>
<div class="t" style="left:13.00px;top:270.81px;font-size:6.6px;line-height:6.6px;color:#111;letter-spacing:-0.2px;">Polttoaineen tyyppi</div>
<div class="t" style="left:-109.20px;width:300px;text-align:right;top:270.81px;font-size:6.6px;line-height:6.6px;color:#111;letter-spacing:-0.2px;">Diesel</div>
<div class="t" style="left:13.00px;top:280.71px;font-size:6.6px;line-height:6.6px;color:#111;letter-spacing:-0.2px;">Kiertovesipumpun ohjaus säätötauolla</div>
<div class="t" style="left:-109.20px;width:300px;text-align:right;top:280.71px;font-size:6.6px;line-height:6.6px;color:#111;letter-spacing:-0.2px;">1</div>
<div class="t" style="left:13.00px;top:290.61px;font-size:6.6px;line-height:6.6px;color:#111;letter-spacing:-0.2px;">HW-versio</div>
<div class="t" style="left:-109.20px;width:300px;text-align:right;top:290.61px;font-size:6.6px;line-height:6.6px;color:#111;letter-spacing:-0.2px;">35/99</div>
<div class="t" style="left:13.00px;top:300.51px;font-size:6.6px;line-height:6.6px;color:#111;letter-spacing:-0.2px;">SW-versio</div>
<div class="t" style="left:-109.20px;width:300px;text-align:right;top:300.51px;font-size:6.6px;line-height:6.6px;color:#111;letter-spacing:-0.2px;">27/99</div>
<div class="t" style="left:13.00px;top:310.41px;font-size:6.6px;line-height:6.6px;color:#111;letter-spacing:-0.2px;">Asiakastunnistenumero</div>
<div class="t" style="left:-109.20px;width:300px;text-align:right;top:310.41px;font-size:6.6px;line-height:6.6px;color:#111;letter-spacing:-0.2px;">0000000000</div>
<div class="t" style="left:13.00px;top:320.31px;font-size:6.6px;line-height:6.6px;color:#111;letter-spacing:-0.2px;">Laitteeen tunnistenumero</div>
<div class="t" style="left:-109.20px;width:300px;text-align:right;top:320.31px;font-size:6.6px;line-height:6.6px;color:#111;letter-spacing:-0.2px;">0656078</div>
<div class="t" style="left:13.00px;top:330.21px;font-size:6.6px;line-height:6.6px;color:#111;letter-spacing:-0.2px;">Parametrikentän tunnistenumero</div>
<div class="t" style="left:-109.20px;width:300px;text-align:right;top:330.21px;font-size:6.6px;line-height:6.6px;color:#111;letter-spacing:-0.2px;">0662418</div>
<div class="t" style="left:13.00px;top:340.11px;font-size:6.6px;line-height:6.6px;color:#111;letter-spacing:-0.2px;">Minimijänniteraja</div>
<div class="t" style="left:-109.20px;width:300px;text-align:right;top:340.11px;font-size:6.6px;line-height:6.6px;color:#111;letter-spacing:-0.2px;">9,76</div>
<div class="t" style="left:196.60px;top:340.11px;font-size:6.6px;line-height:6.6px;color:#111;letter-spacing:-0.2px;">[V]</div>
<div class="t" style="left:263.90px;top:259.71px;font-size:6.6px;line-height:6.6px;color:#1a1a1a;letter-spacing:-0.2px;">Parametri</div>
<div class="t" style="left:380.20px;width:300px;text-align:right;top:259.71px;font-size:6.6px;line-height:6.6px;color:#1a1a1a;letter-spacing:-0.2px;">Arvo</div>
<div class="t" style="left:687.30px;top:259.71px;font-size:6.6px;line-height:6.6px;color:#1a1a1a;letter-spacing:-0.2px;">Yksikkö</div>
<div class="t" style="left:263.90px;top:271.71px;font-size:6.6px;line-height:6.6px;color:#111;font-weight:700;letter-spacing:-0.2px;">Vika 1</div>
<div class="t" style="left:380.20px;width:300px;text-align:right;top:271.71px;font-size:6.6px;line-height:6.6px;color:#111;font-weight:700;letter-spacing:-0.2px;">Ennenaikainen liekintunnistus</div>
<div class="t" style="left:270.70px;top:281.61px;font-size:6.6px;line-height:6.6px;color:#111;letter-spacing:-0.2px;">Koodi</div>
<div class="t" style="left:380.20px;width:300px;text-align:right;top:281.61px;font-size:6.6px;line-height:6.6px;color:#111;letter-spacing:-0.2px;">9803/00</div>
<div class="t" style="left:270.70px;top:291.51px;font-size:6.6px;line-height:6.6px;color:#111;letter-spacing:-0.2px;">Laskuri</div>
<div class="t" style="left:380.20px;width:300px;text-align:right;top:291.51px;font-size:6.6px;line-height:6.6px;color:#111;letter-spacing:-0.2px;">28</div>
<div class="t" style="left:270.70px;top:301.41px;font-size:6.6px;line-height:6.6px;color:#111;letter-spacing:-0.2px;">Lämpötila</div>
<div class="t" style="left:380.20px;width:300px;text-align:right;top:301.41px;font-size:6.6px;line-height:6.6px;color:#111;letter-spacing:-0.2px;">11</div>
<div class="t" style="left:687.30px;top:301.41px;font-size:6.6px;line-height:6.6px;color:#111;letter-spacing:-0.2px;">[°C]</div>
<div class="t" style="left:270.70px;top:311.31px;font-size:6.6px;line-height:6.6px;color:#111;letter-spacing:-0.2px;">Toimintatila</div>
<div class="t" style="left:380.20px;width:300px;text-align:right;top:311.31px;font-size:6.6px;line-height:6.6px;color:#111;letter-spacing:-0.2px;">Liekkivahdin kysely 2</div>
<div class="t" style="left:263.90px;top:321.21px;font-size:6.6px;line-height:6.6px;color:#111;font-weight:700;letter-spacing:-0.2px;">Vika 2</div>
<div class="t" style="left:380.20px;width:300px;text-align:right;top:321.21px;font-size:6.6px;line-height:6.6px;color:#111;font-weight:700;letter-spacing:-0.2px;">Hehkusauvan / liekkivahdin katkos</div>
<div class="t" style="left:270.70px;top:331.11px;font-size:6.6px;line-height:6.6px;color:#111;letter-spacing:-0.2px;">Koodi</div>
<div class="t" style="left:380.20px;width:300px;text-align:right;top:331.11px;font-size:6.6px;line-height:6.6px;color:#111;letter-spacing:-0.2px;">9822/01</div>
<div class="t" style="left:270.70px;top:341.01px;font-size:6.6px;line-height:6.6px;color:#111;letter-spacing:-0.2px;">Laskuri</div>
<div class="t" style="left:380.20px;width:300px;text-align:right;top:341.01px;font-size:6.6px;line-height:6.6px;color:#111;letter-spacing:-0.2px;">2</div>
<div class="t" style="left:270.70px;top:350.91px;font-size:6.6px;line-height:6.6px;color:#111;letter-spacing:-0.2px;">Lämpötila</div>
<div class="t" style="left:380.20px;width:300px;text-align:right;top:350.91px;font-size:6.6px;line-height:6.6px;color:#111;letter-spacing:-0.2px;">-15</div>
<div class="t" style="left:687.30px;top:350.91px;font-size:6.6px;line-height:6.6px;color:#111;letter-spacing:-0.2px;">[°C]</div>
<div class="t" style="left:270.70px;top:360.81px;font-size:6.6px;line-height:6.6px;color:#111;letter-spacing:-0.2px;">Toimintatila</div>
<div class="t" style="left:380.20px;width:300px;text-align:right;top:360.81px;font-size:6.6px;line-height:6.6px;color:#111;letter-spacing:-0.2px;">Hehkutus 10</div>
<div class="t" style="left:263.90px;top:370.71px;font-size:6.6px;line-height:6.6px;color:#111;font-weight:700;letter-spacing:-0.2px;">Vika 3</div>
<div class="t" style="left:380.20px;width:300px;text-align:right;top:370.71px;font-size:6.6px;line-height:6.6px;color:#111;font-weight:700;letter-spacing:-0.2px;">Ennenaikainen liekintunnistus</div>
<div class="t" style="left:270.70px;top:380.61px;font-size:6.6px;line-height:6.6px;color:#111;letter-spacing:-0.2px;">Koodi</div>
<div class="t" style="left:380.20px;width:300px;text-align:right;top:380.61px;font-size:6.6px;line-height:6.6px;color:#111;letter-spacing:-0.2px;">9803/00</div>
<div class="t" style="left:270.70px;top:390.51px;font-size:6.6px;line-height:6.6px;color:#111;letter-spacing:-0.2px;">Laskuri</div>
<div class="t" style="left:380.20px;width:300px;text-align:right;top:390.51px;font-size:6.6px;line-height:6.6px;color:#111;letter-spacing:-0.2px;">28</div>
<div class="t" style="left:270.70px;top:400.41px;font-size:6.6px;line-height:6.6px;color:#111;letter-spacing:-0.2px;">Lämpötila</div>
<div class="t" style="left:380.20px;width:300px;text-align:right;top:400.41px;font-size:6.6px;line-height:6.6px;color:#111;letter-spacing:-0.2px;">11</div>
<div class="t" style="left:687.30px;top:400.41px;font-size:6.6px;line-height:6.6px;color:#111;letter-spacing:-0.2px;">[°C]</div>
<div class="t" style="left:270.70px;top:410.31px;font-size:6.6px;line-height:6.6px;color:#111;letter-spacing:-0.2px;">Toimintatila</div>
<div class="t" style="left:380.20px;width:300px;text-align:right;top:410.31px;font-size:6.6px;line-height:6.6px;color:#111;letter-spacing:-0.2px;">Liekkivahdin kysely 2</div>
<div class="t" style="left:556.40px;top:115.27px;font-size:7px;line-height:7px;color:#111;font-family:'Liberation Mono',monospace;letter-spacing:-0.58px;-webkit-text-stroke-width:0.2px;">Loki käynnistetty: 10.02.17 12:44:08</div>
<div class="t" style="left:556.40px;top:124.17px;font-size:7px;line-height:7px;color:#a6a632;font-family:'Liberation Mono',monospace;letter-spacing:-0.58px;-webkit-text-stroke-width:0;">WUEG2 -&gt; SVT (120s)</div>
<div class="a" style="left:555px;top:218px;width:176px;height:8px;background:#f0f0f0"></div>
<div class="a" style="left:564.6px;top:218.6px;width:24.399999999999977px;height:7.400000000000006px;background:#cdcdcd"></div>
<svg style="left:0;top:0" width="1" height="1"><path d="M559.5 220.7l-1.8 1.6 1.8 1.6" stroke="#555" stroke-width="0.9" fill="none"/><path d="M725 220.7l1.8 1.6-1.8 1.6" stroke="#555" stroke-width="0.9" fill="none"/></svg>
<svg style="left:0;top:0" width="1" height="1"><path d="M660.2 48.4L666.1 48.4C665.5 52 665.3 56 665.8 60C666.2 63 667.5 65.2 667.8 65.8L665.3 69.8C663 67.2 661.5 64 660.8 60C660.2 56 660 52 660.2 48.4Z" fill="#1c48e6" stroke="#1c48e6" stroke-width="0.6"/><path d="M689.2 48.4L683.3 48.4C683.9 52 684.1 56 683.6 60C683.2 63 681.9 65.2 681.6 65.8L684.1 69.8C686.4 67.2 687.9 64 688.6 60C689.2 56 689.4 52 689.2 48.4Z" fill="#1c48e6" stroke="#1c48e6" stroke-width="0.6"/><path d="M666.1 58.5Q674.6 53.2 683 59.1L681.9 63.6Q674.6 57.1 667.5 64.2Z" fill="#f01418" stroke="#f01418" stroke-width="0.7"/></svg>
<div class="t" style="left:688.80px;top:47.83px;font-size:23px;line-height:23px;color:#1c48e6;font-weight:700;letter-spacing:0.2px;-webkit-text-stroke-width:1px;transform:scaleX(1.06);transform-origin:0 0;">ebasto</div>
<div class="t" style="left:720.80px;top:74.01px;font-size:9.2px;line-height:9.2px;color:#2a55dc;font-weight:700;font-style:italic;letter-spacing:0.3px;-webkit-text-stroke-width:0.3px;">Feel the drive</div>
<div class="a" style="left:0px;top:466px;width:800px;height:13px;background:#f0f0f0;border-top:1px solid #dadada"></div>
<div class="t" style="left:1.30px;top:470.72px;font-size:6px;line-height:6px;color:#222;">Valmis</div>
<div class="a" style="left:118px;top:467px;width:1px;height:12px;background:#d5d5d5"></div>
<div class="t" style="left:120.30px;top:470.72px;font-size:6px;line-height:6px;color:#222;">Webasto Thermo Test: 2.13 [Sep 27 2011]</div>
<div class="a" style="left:236px;top:467px;width:1px;height:12px;background:#d5d5d5"></div>
<div class="t" style="left:238.80px;top:470.93px;font-size:5.75px;line-height:5.75px;color:#222;">WUSBLib.dll: 2.4.0.0; 2.4.0.0: 2.4.0.0</div>
<div class="a" style="left:354px;top:467px;width:1px;height:12px;background:#d5d5d5"></div></body></html>
